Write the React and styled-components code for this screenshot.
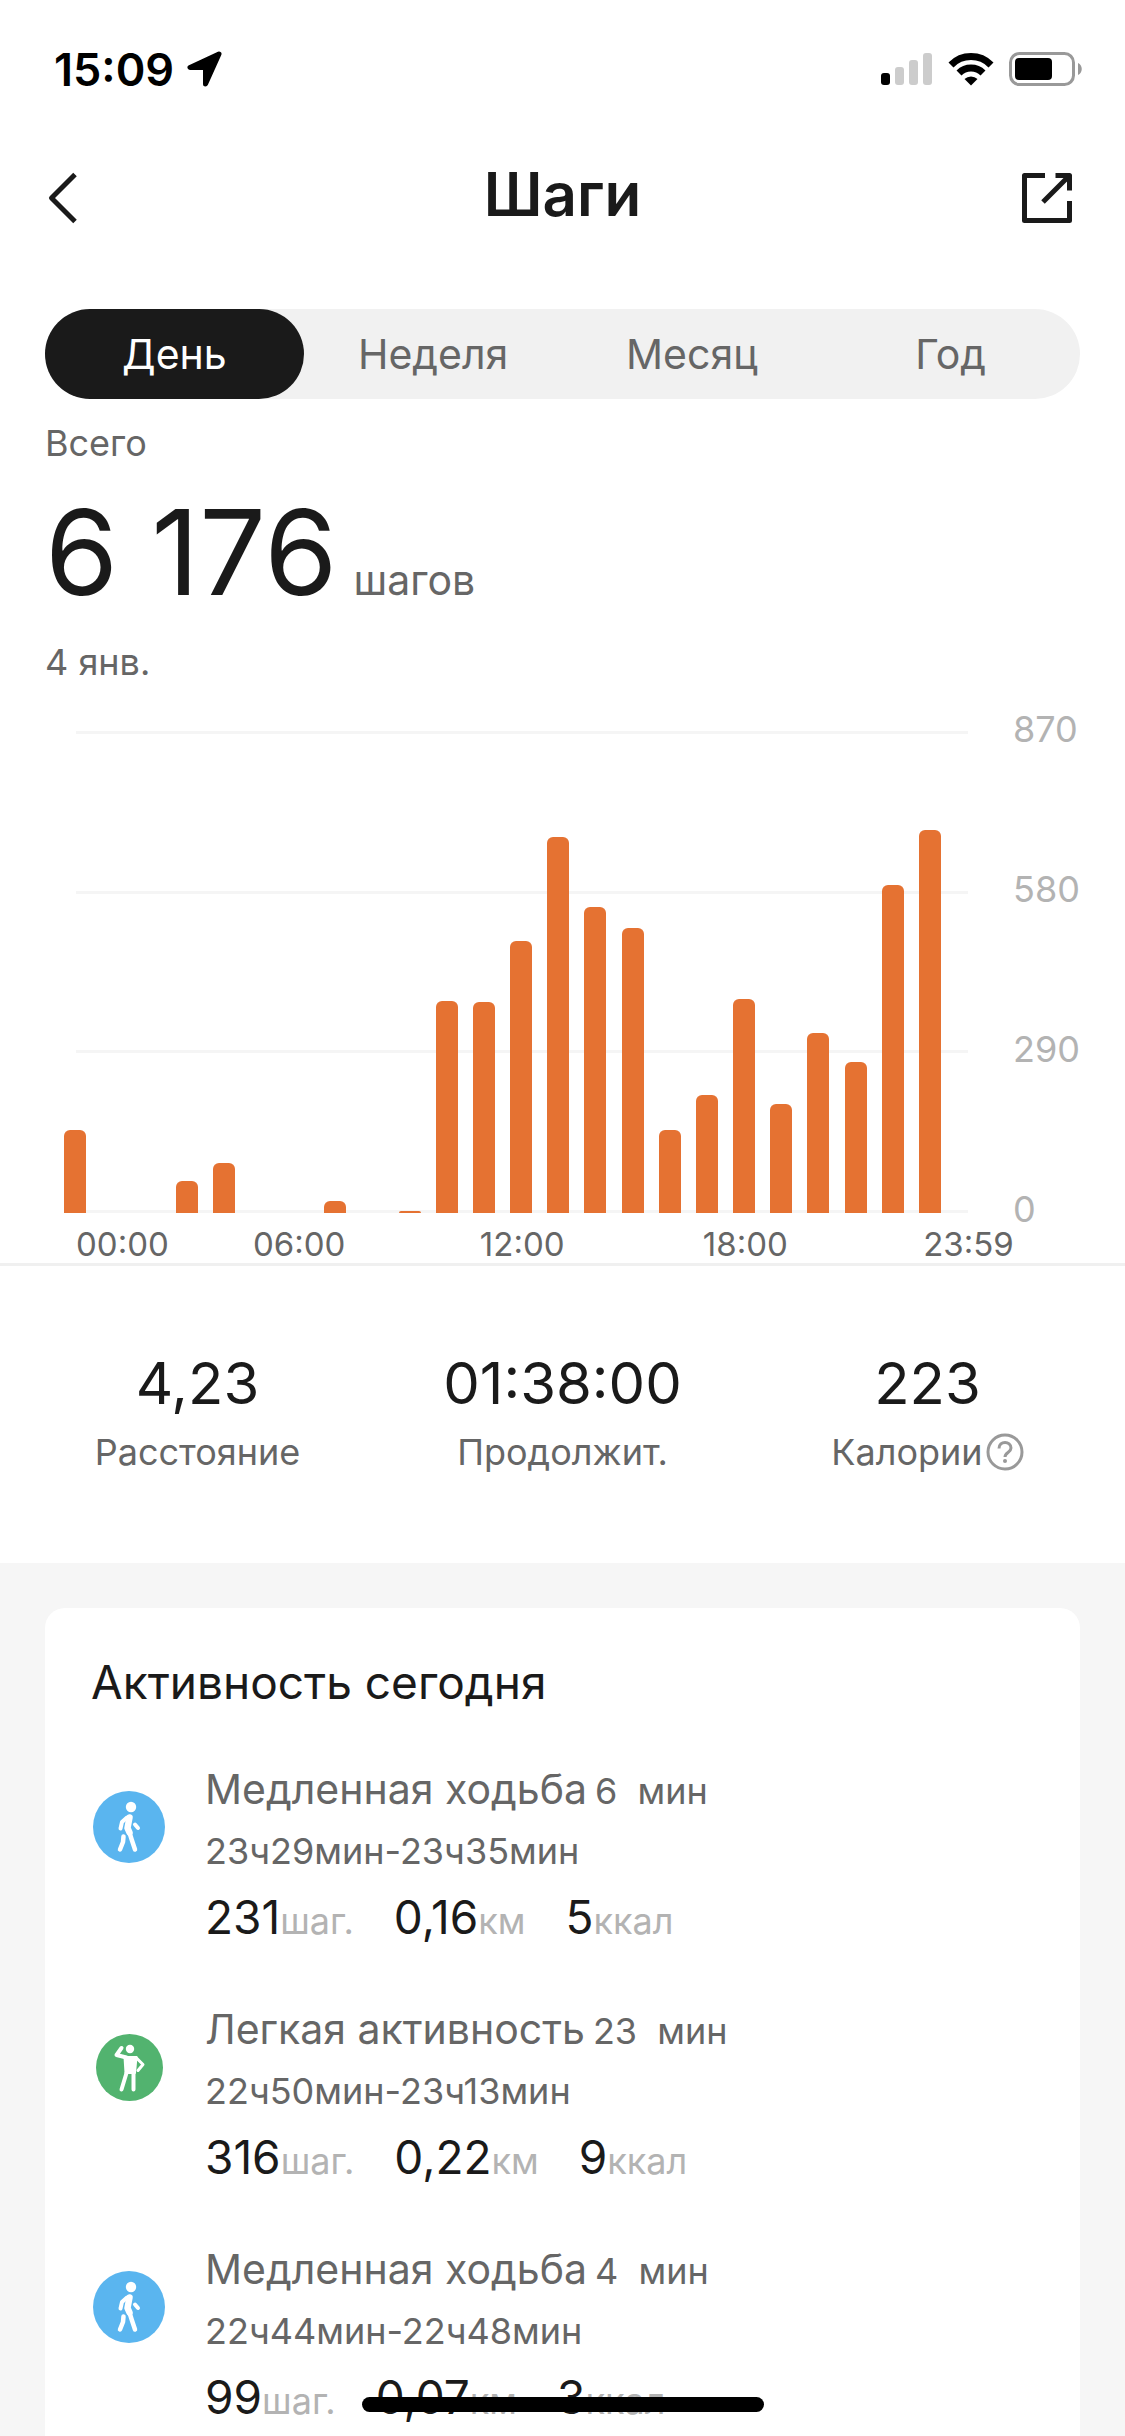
import { useState } from "react";
import styled, { createGlobalStyle } from "styled-components";

const GlobalStyle = createGlobalStyle`
  * {
    box-sizing: border-box;
    margin: 0;
    padding: 0;
  }

  body {
    background-color: #fff;
    color: #1a1a1a;
    font-family: Inter, "Liberation Sans", sans-serif;
  }

  button {
    border: none;
    background: none;
    font: inherit;
    cursor: pointer;
  }
`;

const Screen = styled.div`
  height: 100vh;
  display: flex;
  flex-direction: column;
  overflow: hidden;
`;

const StatusBar = styled.div`
  display: flex;
  justify-content: space-between;
  align-items: center;
  height: 138px;
  padding: 0 43px 0 54px;
  color: #000;
  flex-shrink: 0;
`;

const Clock = styled.span`
  display: flex;
  align-items: center;
  gap: 13px;
  font-size: 45px;
  font-weight: 600;
`;

const StatusIcons = styled.span`
  display: flex;
  align-items: center;
  gap: 15px;
`;

const Header = styled.header`
  display: flex;
  justify-content: space-between;
  align-items: center;
  height: 120px;
  padding: 0 53px 0 45px;
  flex-shrink: 0;
`;

const Title = styled.h1`
  padding: 0 0 8px 8px;
  font-size: 60px;
  line-height: 72px;
  font-weight: 600;
`;

const IconButton = styled.button`
  display: flex;
  width: 60px;
  height: 60px;
  align-items: center;
  justify-content: ${(props) => props.$align};
`;

const Content = styled.main`
  flex: 1;
  min-height: 0;
  display: flex;
  flex-direction: column;
  overflow-y: auto;
  scrollbar-width: none;
`;

const Tabs = styled.div`
  display: flex;
  flex-shrink: 0;
  height: 90px;
  margin: 51px 45px 0;
  border-radius: 45px;
  background-color: #f1f1f1;
`;

const Tab = styled.button`
  flex: 1;
  border-radius: 45px;
  font-size: 41px;
  color: ${(props) => (props.$active ? "#fff" : "#666")};
  background-color: ${(props) => (props.$active ? "#1a1a1a" : "transparent")};
`;

const Summary = styled.section`
  padding: 22px 45px 0;
`;

const Caption = styled.p`
  font-size: 36px;
  line-height: 44px;
  color: #666;
`;

const Total = styled.p`
  display: flex;
  align-items: baseline;
  gap: 16px;
  margin: 21px 0 22px;
  font-size: 118px;
  line-height: 132px;
`;

const TotalUnit = styled.span`
  font-size: 41px;
  line-height: 44px;
  color: #666;
`;

const Chart = styled.section`
  display: grid;
  grid-template-columns: 1fr 112px;
  column-gap: 45px;
  padding: 47px 0 0 64px;
`;

const Plot = styled.div`
  display: grid;
  height: 482px;
`;

const GridLines = styled.div`
  grid-area: 1 / 1;
  display: flex;
  flex-direction: column;
  justify-content: space-between;
  margin-left: 12px;
`;

const GridLine = styled.span`
  height: 3px;
  background-color: #f5f5f5;
`;

const Bars = styled.div`
  grid-area: 1 / 1;
  display: flex;
  align-items: flex-end;
  margin-right: 12px;
  z-index: 1;
`;

const BarSlot = styled.div`
  flex: 1;
  height: 480px;
  display: flex;
  align-items: flex-end;
`;

const Bar = styled.div`
  width: 22px;
  border-radius: 6px 6px 0 0;
  background-color: #e57232;
`;

const Scale = styled.div`
  display: flex;
  flex-direction: column;
  justify-content: space-between;
  margin: -24px 0 -18px;
  font-size: 36px;
  line-height: 44px;
  color: #b3b3b3;
`;

/* The first label starts at the axis, the others are centred on their tick */
const Hours = styled.div`
  grid-column: 1 / -1;
  display: grid;
  grid-template-columns: 1fr repeat(4, 2fr);
  margin: 13px 45px 0 12px;
  font-size: 33px;
  line-height: 36px;
  text-align: center;
  color: #666;

  span:first-child {
    text-align: left;
  }
`;

const Stats = styled.section`
  display: grid;
  grid-template-columns: repeat(3, 1fr);
  margin-top: 1px;
  padding: 81px 15px 89px;
  border-top: 3px solid #f0f0f0;
  text-align: center;
`;

const StatValue = styled.p`
  font-size: 58px;
  line-height: 72px;
`;

const StatLabel = styled.p`
  display: flex;
  justify-content: center;
  align-items: center;
  gap: 3px;
  font-size: 36px;
  line-height: 44px;
  margin-top: 11px;
  color: #666;
`;

const HelpButton = styled.button`
  display: flex;
`;

const Feed = styled.section`
  flex: 1 0 auto;
  padding: 45px 45px 0;
  background-color: #f6f6f6;
`;

const Card = styled.div`
  padding: 45px 46px 80px;
  border-radius: 20px;
  background-color: #fff;
`;

const CardTitle = styled.h2`
  font-size: 46px;
  line-height: 58px;
  font-weight: 400;
`;

const ActivityList = styled.ul`
  display: flex;
  flex-direction: column;
  gap: 55px;
  margin-top: 50px;
  list-style: none;
`;

const Activity = styled.li`
  display: flex;
  gap: 38px;
`;

const ActivityIcon = styled.span`
  display: flex;
  flex-shrink: 0;
  width: 76px;
  height: 72px;
  margin-top: 30px;
  align-items: center;
  justify-content: center;
`;

const ActivityName = styled.p`
  font-size: 41px;
  line-height: 56px;
  color: #666;
`;

const Duration = styled.span`
  margin-left: 8px;
  font-size: 36px;
  line-height: 44px;
  white-space: pre;
`;

const Period = styled.p`
  margin-top: 8px;
  font-size: 36px;
  line-height: 52px;
  color: #666;
`;

const Metrics = styled.p`
  display: flex;
  gap: 40px;
  margin-top: 11px;
  font-size: 46px;
  line-height: 58px;
`;

const Unit = styled.span`
  font-size: 36px;
  line-height: 44px;
  color: #b3b3b3;
`;

const HomeIndicator = styled.div`
  position: fixed;
  bottom: 24px;
  left: 50%;
  width: 402px;
  height: 15px;
  transform: translateX(-50%);
  border-radius: 8px;
  background-color: #000;
  z-index: 2;
`;

const tabs = ["День", "Неделя", "Месяц", "Год"];
const maxSteps = 870;
const scale = [870, 580, 290, 0];
const hours = ["00:00", "06:00", "12:00", "18:00", "23:59"];
const steps = [
  151, 0, 0, 58, 90, 0, 0, 21, 0, 4, 385, 383, 493, 681, 554, 516, 151, 214,
  388, 197, 327, 274, 594, 695,
];

const activities = [
  {
    type: "walk",
    name: "Медленная ходьба",
    minutes: 6,
    period: "23ч29мин-23ч35мин",
    steps: "231",
    distance: "0,16",
    calories: "5",
  },
  {
    type: "light",
    name: "Легкая активность",
    minutes: 23,
    period: "22ч50мин-23ч13мин",
    steps: "316",
    distance: "0,22",
    calories: "9",
  },
  {
    type: "walk",
    name: "Медленная ходьба",
    minutes: 4,
    period: "22ч44мин-22ч48мин",
    steps: "99",
    distance: "0,07",
    calories: "3",
  },
];

const LocationIcon = () => (
  <svg width="35" height="36" viewBox="0 0 35 36" aria-hidden="true">
    <path
      d="M32 3 3 16.500h15.500V33z"
      fill="#000"
      stroke="#000"
      strokeWidth="5"
      strokeLinejoin="round"
    />
  </svg>
);

const SignalIcon = () => (
  <svg width="52" height="33" viewBox="0 0 52 33" aria-hidden="true">
    <rect x="0" y="20" width="9" height="12" rx="3" fill="#000" />
    <rect x="14" y="14" width="9" height="18" rx="3" fill="#ccc" />
    <rect x="28" y="7" width="9" height="25" rx="3" fill="#ccc" />
    <rect x="42" y="0" width="9" height="32" rx="3" fill="#ccc" />
  </svg>
);

const WifiIcon = () => (
  <svg width="46" height="33" viewBox="0 0 46 33" aria-hidden="true">
    <path d="M3 12a28 28 0 0 1 40 0" fill="none" stroke="#000" strokeWidth="7" />
    <path d="M11 20a17 17 0 0 1 24 0" fill="none" stroke="#000" strokeWidth="7" />
    <path d="M16.500 26a9.500 9.500 0 0 1 13 0L23 32.500z" fill="#000" />
  </svg>
);

const BatteryIcon = () => (
  <svg width="73" height="34" viewBox="0 0 73 34" aria-hidden="true">
    <rect x="1.500" y="1.500" width="63" height="31" rx="9" fill="none" stroke="#999" strokeWidth="3" />
    <rect x="6" y="6" width="37" height="22" rx="4" fill="#000" />
    <path d="M69 11c5 2 5 10 0 12z" fill="#999" />
  </svg>
);

const BackIcon = () => (
  <svg width="34" height="52" viewBox="0 0 34 52" aria-hidden="true">
    <path d="M30 2.500 6.500 26 30 49.500" fill="none" stroke="#1a1a1a" strokeWidth="5" strokeLinejoin="round" />
  </svg>
);

const ShareIcon = () => (
  <svg width="50" height="50" viewBox="0 0 50 50" fill="none" stroke="#1a1a1a" strokeWidth="5" strokeLinejoin="round" aria-hidden="true">
    <path d="M23 2.500H2.500v45h45V28M33.500 2.500h14V17.500M47 3 21 29" />
  </svg>
);

const HelpIcon = () => (
  <svg width="38" height="38" viewBox="0 0 38 38" fill="none" stroke="#999" strokeWidth="3" aria-hidden="true">
    <circle cx="19" cy="19" r="17" />
    <path d="M13 15.500c0-8 12-8 12-.5 0 4.500-6 4.500-6 9" />
    <circle cx="19" cy="28" r="2" fill="#999" stroke="none" />
  </svg>
);

const WalkIcon = () => (
  <svg width="72" height="72" viewBox="0 0 72 72" aria-hidden="true">
    <circle cx="36" cy="36" r="36" fill="#5ab5ef" />
    <g fill="none" stroke="#fff" strokeLinecap="round" strokeLinejoin="round">
      <path d="M34 26.500 29 31l-1.500 6.500" strokeWidth="4" />
      <path d="m42 33.500 3 3.500" strokeWidth="4" />
      <path d="M30.500 45.500 30 51l-3 7.500M36 40l2.500 8L42 58.500" strokeWidth="4.500" />
      <path d="M36.500 26.500 34.500 37l2 4.500" strokeWidth="6.500" />
    </g>
    <circle cx="38" cy="16" r="5.200" fill="#fff" />
  </svg>
);

const LightActivityIcon = () => (
  <svg width="67" height="67" viewBox="0 0 67 67" aria-hidden="true">
    <circle cx="33.500" cy="33.500" r="33.500" fill="#52b36f" />
    <path d="M28.500 23h12l-1.500 16h-9.500z" fill="#fff" stroke="#fff" strokeWidth="2" strokeLinejoin="round" />
    <g fill="none" stroke="#fff" strokeWidth="4" strokeLinecap="round" strokeLinejoin="round">
      <path d="M30.500 23.500 20.500 21l5-7" />
      <path d="m40 23.500 7 7-5 6" strokeWidth="3" />
      <path d="m30.500 39-5 16.500M37.500 39v16.500" />
    </g>
    <circle cx="34" cy="15" r="4.200" fill="#fff" />
  </svg>
);

const StepsChart = () => (
  <Chart>
    <Plot>
      <GridLines>
        {scale.map((value) => (
          <GridLine key={value} />
        ))}
      </GridLines>
      <Bars>
        {steps.map((value, hour) => (
          <BarSlot key={hour}>
            <Bar style={{ height: `${(value / maxSteps) * 100}%` }} />
          </BarSlot>
        ))}
      </Bars>
    </Plot>
    <Scale>
      {scale.map((value) => (
        <span key={value}>{value}</span>
      ))}
    </Scale>
    <Hours>
      {hours.map((hour) => (
        <span key={hour}>{hour}</span>
      ))}
    </Hours>
  </Chart>
);

const ActivityRow = ({ item }) => (
  <Activity>
    <ActivityIcon>
      {item.type === "walk" ? <WalkIcon /> : <LightActivityIcon />}
    </ActivityIcon>
    <div>
      <ActivityName>
        {item.name}
        <Duration>{`${item.minutes}  мин`}</Duration>
      </ActivityName>
      <Period>{item.period}</Period>
      <Metrics>
        <span>
          {item.steps}
          <Unit>шаг.</Unit>
        </span>
        <span>
          {item.distance}
          <Unit>км</Unit>
        </span>
        <span>
          {item.calories}
          <Unit>ккал</Unit>
        </span>
      </Metrics>
    </div>
  </Activity>
);

const App = () => {
  const [activeTab, setActiveTab] = useState(0);

  return (
    <Screen>
      <GlobalStyle />
      <StatusBar>
        <Clock>
          15:09
          <LocationIcon />
        </Clock>
        <StatusIcons>
          <SignalIcon />
          <WifiIcon />
          <BatteryIcon />
        </StatusIcons>
      </StatusBar>
      <Header>
        <IconButton $align="flex-start" aria-label="Назад">
          <BackIcon />
        </IconButton>
        <Title>Шаги</Title>
        <IconButton $align="flex-end" aria-label="Поделиться">
          <ShareIcon />
        </IconButton>
      </Header>
      <Content>
        <Tabs>
          {tabs.map((tab, i) => (
            <Tab key={tab} $active={i === activeTab} onClick={() => setActiveTab(i)}>
              {tab}
            </Tab>
          ))}
        </Tabs>
        <Summary>
          <Caption>Всего</Caption>
          <Total>
            6 176
            <TotalUnit>шагов</TotalUnit>
          </Total>
          <Caption>4 янв.</Caption>
        </Summary>
        <StepsChart />
        <Stats>
          <div>
            <StatValue>4,23</StatValue>
            <StatLabel>Расстояние</StatLabel>
          </div>
          <div>
            <StatValue>01:38:00</StatValue>
            <StatLabel>Продолжит.</StatLabel>
          </div>
          <div>
            <StatValue>223</StatValue>
            <StatLabel>
              Калории
              <HelpButton aria-label="Справка">
                <HelpIcon />
              </HelpButton>
            </StatLabel>
          </div>
        </Stats>
        <Feed>
          <Card>
            <CardTitle>Активность сегодня</CardTitle>
            <ActivityList>
              {activities.map((item, i) => (
                <ActivityRow key={i} item={item} />
              ))}
            </ActivityList>
          </Card>
        </Feed>
      </Content>
      <HomeIndicator />
    </Screen>
  );
};

export default App;
